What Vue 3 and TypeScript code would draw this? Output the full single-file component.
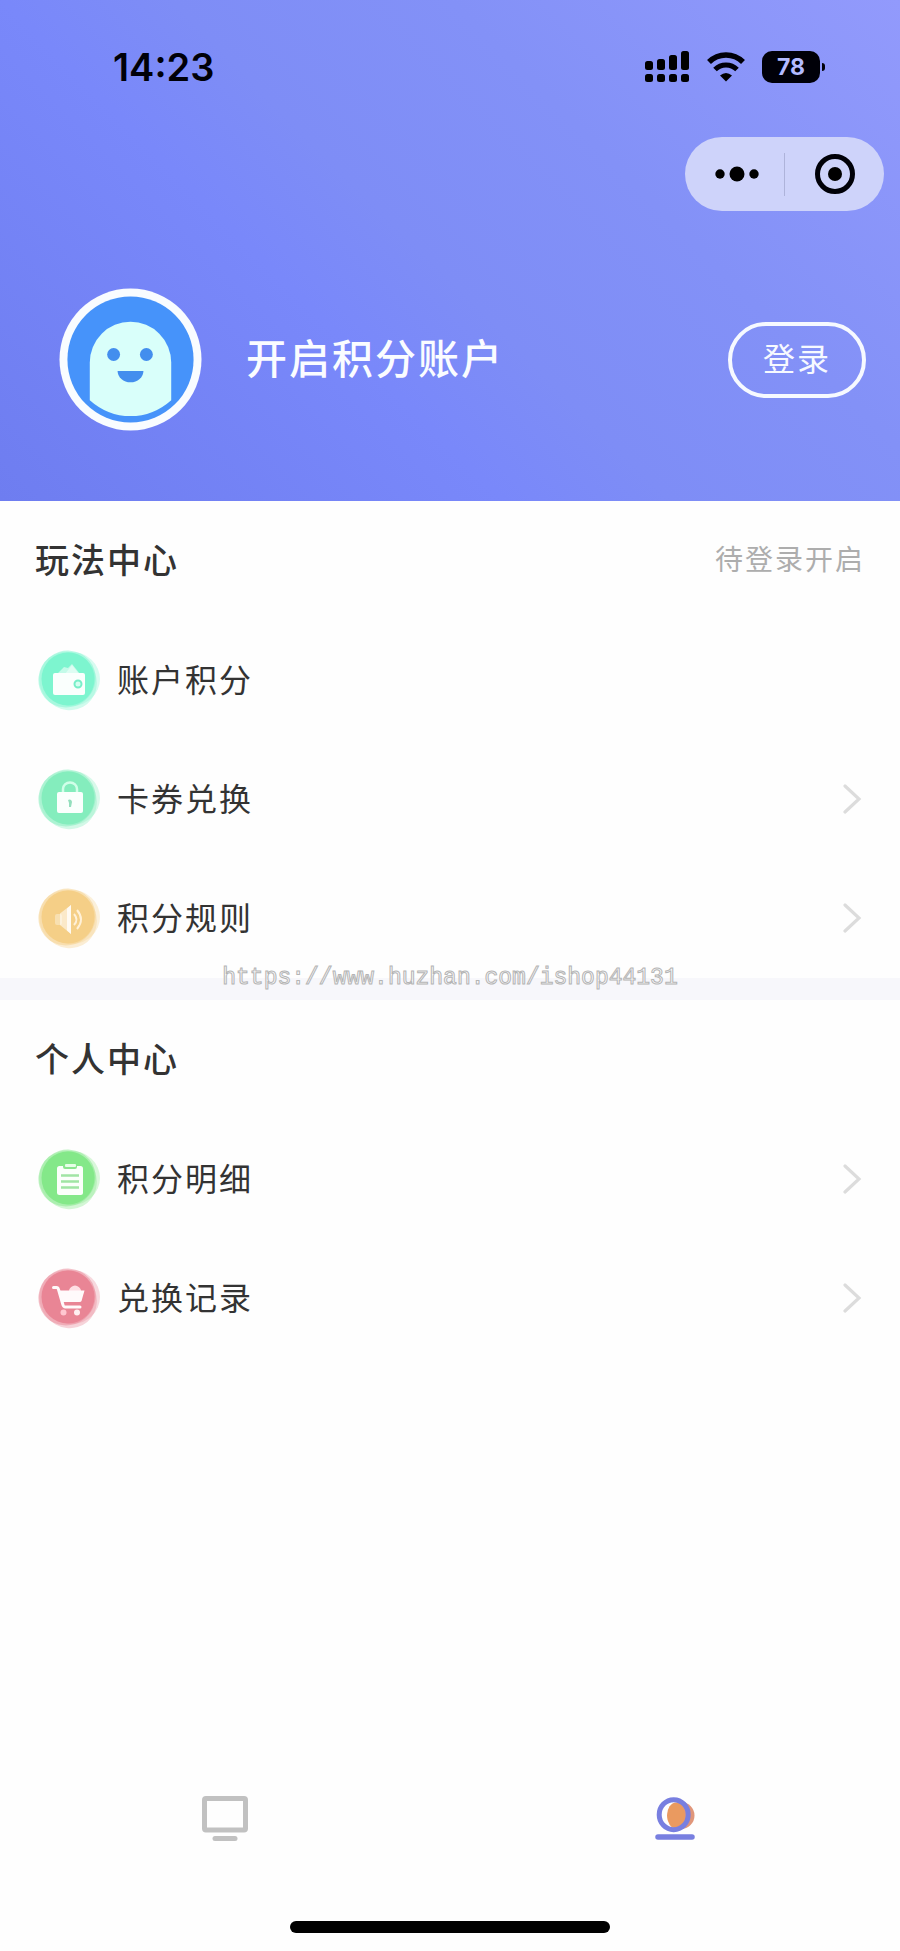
<script setup lang="ts">
type IconName = 'wallet' | 'lock' | 'speaker' | 'clipboard' | 'cart'

interface MenuItem {
  label: string
  icon: IconName
  link: boolean
}

interface MenuSection {
  title: string
  hint?: string
  items: MenuItem[]
}

const sections: MenuSection[] = [
  {
    title: '玩法中心',
    hint: '待登录开启',
    items: [
      { label: '账户积分', icon: 'wallet', link: false },
      { label: '卡券兑换', icon: 'lock', link: true },
      { label: '积分规则', icon: 'speaker', link: true },
    ],
  },
  {
    title: '个人中心',
    items: [
      { label: '积分明细', icon: 'clipboard', link: true },
      { label: '兑换记录', icon: 'cart', link: true },
    ],
  },
]
</script>

<template>
  <div class="page">
    <header class="hero">
      <div class="status">
        <time class="clock">14:23</time>
        <div class="status-icons">
          <svg class="signal" width="45" height="32" viewBox="0 0 45 32" aria-hidden="true">
            <rect x="0" y="10" width="8" height="9" rx="2.500" />
            <rect x="12" y="8" width="8" height="11" rx="2.500" />
            <rect x="24" y="4" width="8" height="15" rx="2.500" />
            <rect x="36" y="0" width="8" height="19" rx="2.500" />
            <rect x="0" y="23" width="8" height="8" rx="2.500" />
            <rect x="12" y="23" width="8" height="8" rx="2.500" />
            <rect x="24" y="23" width="8" height="8" rx="2.500" />
            <rect x="36" y="23" width="8" height="8" rx="2.500" />
          </svg>
          <svg class="wifi" width="40" height="30" viewBox="0 0 40 30" aria-hidden="true">
            <path d="M3 10a24 24 0 0 1 34 0" fill="none" stroke="#000008" stroke-width="5.500" />
            <path d="M9 17.500a15.500 15.500 0 0 1 22 0" fill="none" stroke="#000008" stroke-width="5" />
            <path d="M14 23.500q6-5 12 0L20 29.500z" />
          </svg>
          <div class="battery"><span class="level">78</span></div>
        </div>
      </div>

      <div class="capsule">
        <button class="capsule-btn more" type="button" aria-label="更多">
          <svg width="44" height="16" viewBox="0 0 44 16" aria-hidden="true">
            <circle cx="5" cy="8" r="4.700" />
            <circle cx="22" cy="8" r="7.500" />
            <circle cx="39" cy="8" r="4.700" />
          </svg>
        </button>
        <button class="capsule-btn" type="button" aria-label="关闭">
          <svg width="40" height="40" viewBox="0 0 40 40" aria-hidden="true">
            <circle cx="20" cy="20" r="17.500" fill="none" stroke="#000008" stroke-width="5" />
            <circle cx="20" cy="20" r="7" />
          </svg>
        </button>
      </div>

      <div class="profile">
        <svg class="avatar" width="143" height="143" viewBox="0 0 144 144" aria-hidden="true">
          <circle cx="72" cy="72" r="71.500" fill="#f9fcff" />
          <circle cx="72" cy="72" r="63.500" fill="#4693fa" />
          <path d="M31 75a41 41 0 0 1 82 0v38q-18 16-41 16t-41-16z" fill="#d9fffa" />
          <circle cx="55" cy="67" r="6.500" fill="#438eee" />
          <circle cx="88" cy="67" r="6.500" fill="#438eee" />
          <path d="M59 83.500h26a13 11.500 0 0 1-26 0z" fill="#438eee" />
        </svg>
        <h1 class="name">开启积分账户</h1>
        <button class="login" type="button">登录</button>
      </div>
    </header>

    <main class="content">
      <section v-for="section in sections" :key="section.title" class="section">
        <div class="section-head">
          <h2 class="section-title">{{ section.title }}</h2>
          <span v-if="section.hint" class="hint">{{ section.hint }}</span>
        </div>
        <ul class="list">
          <li v-for="item in section.items" :key="item.label">
            <component :is="item.link ? 'a' : 'div'" class="row" :href="item.link ? '#' : undefined">
              <svg class="icon" width="68" height="68" viewBox="0 0 68 68" aria-hidden="true">
                <g :class="['blob', item.icon]">
                  <ellipse cx="37" cy="32" rx="28" ry="27" opacity=".3" />
                  <ellipse cx="33" cy="34" rx="30" ry="28" opacity=".35" transform="rotate(50 33 34)" />
                  <ellipse cx="32" cy="32" rx="29" ry="28" opacity=".5" transform="rotate(-40 32 32)" />
                  <circle cx="33" cy="32" r="26.500" />
                </g>
                <g v-if="item.icon === 'wallet'">
                  <path d="M22 27l7-7 4 1 4-4 8 10z" fill="#fff" opacity=".55" />
                  <path d="M30 27l7-9 7 9z" fill="#fff" opacity=".45" />
                  <rect x="18" y="26" width="32" height="22" rx="2" fill="#fafffd" />
                  <circle cx="43" cy="37" r="3.500" fill="#d3fff0" stroke="#77efc8" stroke-width="2" />
                </g>
                <g v-else-if="item.icon === 'lock'">
                  <path d="M28 27v-4a7 6.500 0 0 1 14 0v4" fill="none" stroke="#d0ffe9" stroke-width="2.500" />
                  <rect x="22" y="26" width="26" height="21" rx="2" fill="#fafffd" />
                  <path d="M33 34a2.500 2.500 0 0 1 4 2l-1 5h-2v-4z" fill="#93dfbd" />
                </g>
                <g v-else-if="item.icon === 'speaker'">
                  <rect x="20" y="29" width="7" height="11" rx="2" fill="#fff" opacity=".35" />
                  <path d="M25 28.500L36 20v29L25 40z" fill="#fff" opacity=".55" />
                  <path d="M32 23.500l4-3.500v29l-4-3.500z" fill="#fffaf2" />
                  <path d="M39 29q5 5.500 0 11" fill="none" stroke="#fff1d8" stroke-width="2" />
                  <path d="M42 25q8 9.500 0 19" fill="none" stroke="#fff1d8" stroke-width="2" />
                </g>
                <g v-else-if="item.icon === 'clipboard'">
                  <rect x="22" y="20" width="26" height="29" rx="2.500" fill="#fbfffb" />
                  <path d="M28 19h14v2q0 2-2 2H30q-2 0-2-2z" fill="#8be58f" />
                  <rect x="30" y="18" width="11" height="3" rx="1" fill="#e7ffe8" />
                  <path d="M26 29.500h18M26 35.500h18M26 41.500h18" stroke="#a0e5a4" stroke-width="2.500" />
                </g>
                <g v-else>
                  <path d="M34 26q0-3 4-5 2-1 4 0 4 2 4 5z" fill="#ffdfe4" />
                  <path d="M18.500 22.500h3q1.500 0 2 2l4.500 15.500q.5 2 2.500 2h14.500" fill="none" stroke="#fffafb" stroke-width="3" stroke-linecap="round" stroke-linejoin="round" />
                  <path d="M23 25.500h26.500l-3 10.500q-.4 1-2 1H28z" fill="#fffafb" />
                  <circle cx="28.500" cy="47.500" r="3" fill="#ffc7d0" />
                  <circle cx="42" cy="47.500" r="3" fill="#ffeff1" />
                </g>
              </svg>
              <span class="label">{{ item.label }}</span>
              <svg v-if="item.link" class="chevron" width="22" height="32" viewBox="0 0 22 32" aria-hidden="true">
                <path d="M3 2l14 13L3 28" fill="none" stroke="#dcdcdc" stroke-width="3.200" stroke-linecap="round" />
              </svg>
            </component>
          </li>
        </ul>
      </section>
      <p class="watermark">https://www.huzhan.com/ishop44131</p>
    </main>

    <nav class="tabs" aria-label="主导航">
      <a class="tab" href="#" aria-label="首页">
        <svg width="46" height="46" viewBox="0 0 46 46" aria-hidden="true">
          <rect x="2.500" y="2.500" width="41" height="31.500" rx="1.500" fill="none" stroke="#c1c1c1" stroke-width="5" />
          <path d="M13 42.500h20" stroke="#c1c1c1" stroke-width="5" stroke-linecap="round" />
        </svg>
      </a>
      <a class="tab" href="#" aria-label="我的" aria-current="page">
        <svg width="40" height="46" viewBox="0 0 40 46" aria-hidden="true">
          <ellipse cx="26" cy="19.500" rx="13.500" ry="13.500" fill="#e0967a" />
          <ellipse cx="21" cy="19.500" rx="9" ry="13" fill="#ea9a60" />
          <ellipse cx="18.700" cy="18.700" rx="14.500" ry="15" fill="none" stroke="#787fe0" stroke-width="5" />
          <path d="M3 41h34" stroke="#787fe0" stroke-width="5.500" stroke-linecap="round" />
        </svg>
      </a>
    </nav>
    <div class="home-indicator"></div>
  </div>
</template>

<style>
body {
  margin: 0;
}
</style>

<style scoped>
.page {
  display: flex;
  flex-direction: column;
  min-height: 100vh;
  background: #fefefe;
  color: #333;
  font-family: "Liberation Sans", "Noto Sans CJK SC", sans-serif;
  letter-spacing: 2px;
}

button {
  margin: 0;
  padding: 0;
  border: 0;
  background: none;
  color: inherit;
  font: inherit;
  letter-spacing: inherit;
}

.hero {
  display: flex;
  flex-direction: column;
  padding-bottom: 70px;
  background: linear-gradient(45deg, #6e7df0 0%, #7988fa 36%, #7e8df6 48%, #8391f7 68%, #929afc 100%);
}

.status {
  display: flex;
  align-items: center;
  justify-content: space-between;
  height: 134px;
  padding: 0 75px 0 113px;
  color: #000008;
  font-family: Inter, sans-serif;
  letter-spacing: normal;
}

.clock {
  font-size: 38px;
  font-weight: 600;
}

.status-icons {
  display: flex;
  align-items: center;
}

.signal,
.wifi {
  margin-right: 16px;
}

.battery {
  position: relative;
  display: flex;
  align-items: center;
  justify-content: center;
  width: 58px;
  height: 32px;
  margin-right: 5px;
  border-radius: 10px;
  background: #000008;
}

.battery::after {
  content: "";
  position: absolute;
  top: 12px;
  right: -5px;
  width: 3px;
  height: 8px;
  border-radius: 0 4px 4px 0;
  background: #000008;
}

.level {
  color: #b3bbff;
  font-size: 23px;
  font-weight: 700;
}

.capsule {
  display: flex;
  align-items: center;
  align-self: flex-end;
  width: 199px;
  height: 74px;
  margin: 3px 16px 0 0;
  border-radius: 37px;
  background: #ced3fa;
}

.capsule-btn {
  display: flex;
  flex: 1;
  align-items: center;
  justify-content: center;
  height: 43px;
}

.more {
  box-sizing: border-box;
  flex: 0 0 100px;
  padding-left: 5px;
  border-right: 1px solid #aeb3da;
}

.profile {
  display: flex;
  align-items: center;
  margin-top: 77px;
  padding: 0 34px 0 59px;
}

.name {
  flex: 1;
  margin: 0 0 0 44px;
  color: #fafcff;
  font-size: 41px;
  font-weight: 500;
  line-height: 60px;
}

.login {
  width: 138px;
  height: 76px;
  border: 4px solid #f6f9ff;
  border-radius: 38px;
  color: #f6f9ff;
  font-size: 32px;
  line-height: 48px;
}

.content {
  position: relative;
  flex: 1;
}

.section + .section {
  border-top: 22px solid #f7f7fb;
}

.section-head {
  display: flex;
  align-items: center;
  justify-content: space-between;
  height: 119px;
  padding: 0 35px;
}

.section-title {
  margin: 0;
  font-size: 34px;
  font-weight: 500;
  line-height: 48px;
}

.hint {
  color: #adadad;
  font-size: 28px;
  line-height: 48px;
}

.list {
  margin: 0;
  padding: 1px 0 0;
  list-style: none;
}

.row {
  display: flex;
  align-items: center;
  height: 119px;
  padding: 0 36px 0 35px;
  color: #333;
  text-decoration: none;
}

.label {
  flex: 1;
  margin-left: 14px;
  font-size: 32px;
  line-height: 48px;
}

.wallet {
  fill: #7df5cf;
}

.lock {
  fill: #84edbd;
}

.speaker {
  fill: #f5cf87;
}

.clipboard {
  fill: #84e889;
}

.cart {
  fill: #e98595;
}

.watermark {
  position: absolute;
  top: 461px;
  right: 0;
  left: 0;
  margin: 0;
  color: #fcfcfd;
  font-family: "Liberation Mono", monospace;
  font-size: 23px;
  line-height: 32px;
  letter-spacing: normal;
  text-align: center;
  -webkit-text-stroke: 1px #b4b4b4;
  pointer-events: none;
}

.tabs {
  display: flex;
  padding-bottom: 79px;
}

.tab {
  display: flex;
  flex: 1;
  justify-content: center;
}

.home-indicator {
  align-self: center;
  width: 320px;
  height: 12px;
  margin-bottom: 18px;
  border-radius: 6px;
  background: #000;
}
</style>
